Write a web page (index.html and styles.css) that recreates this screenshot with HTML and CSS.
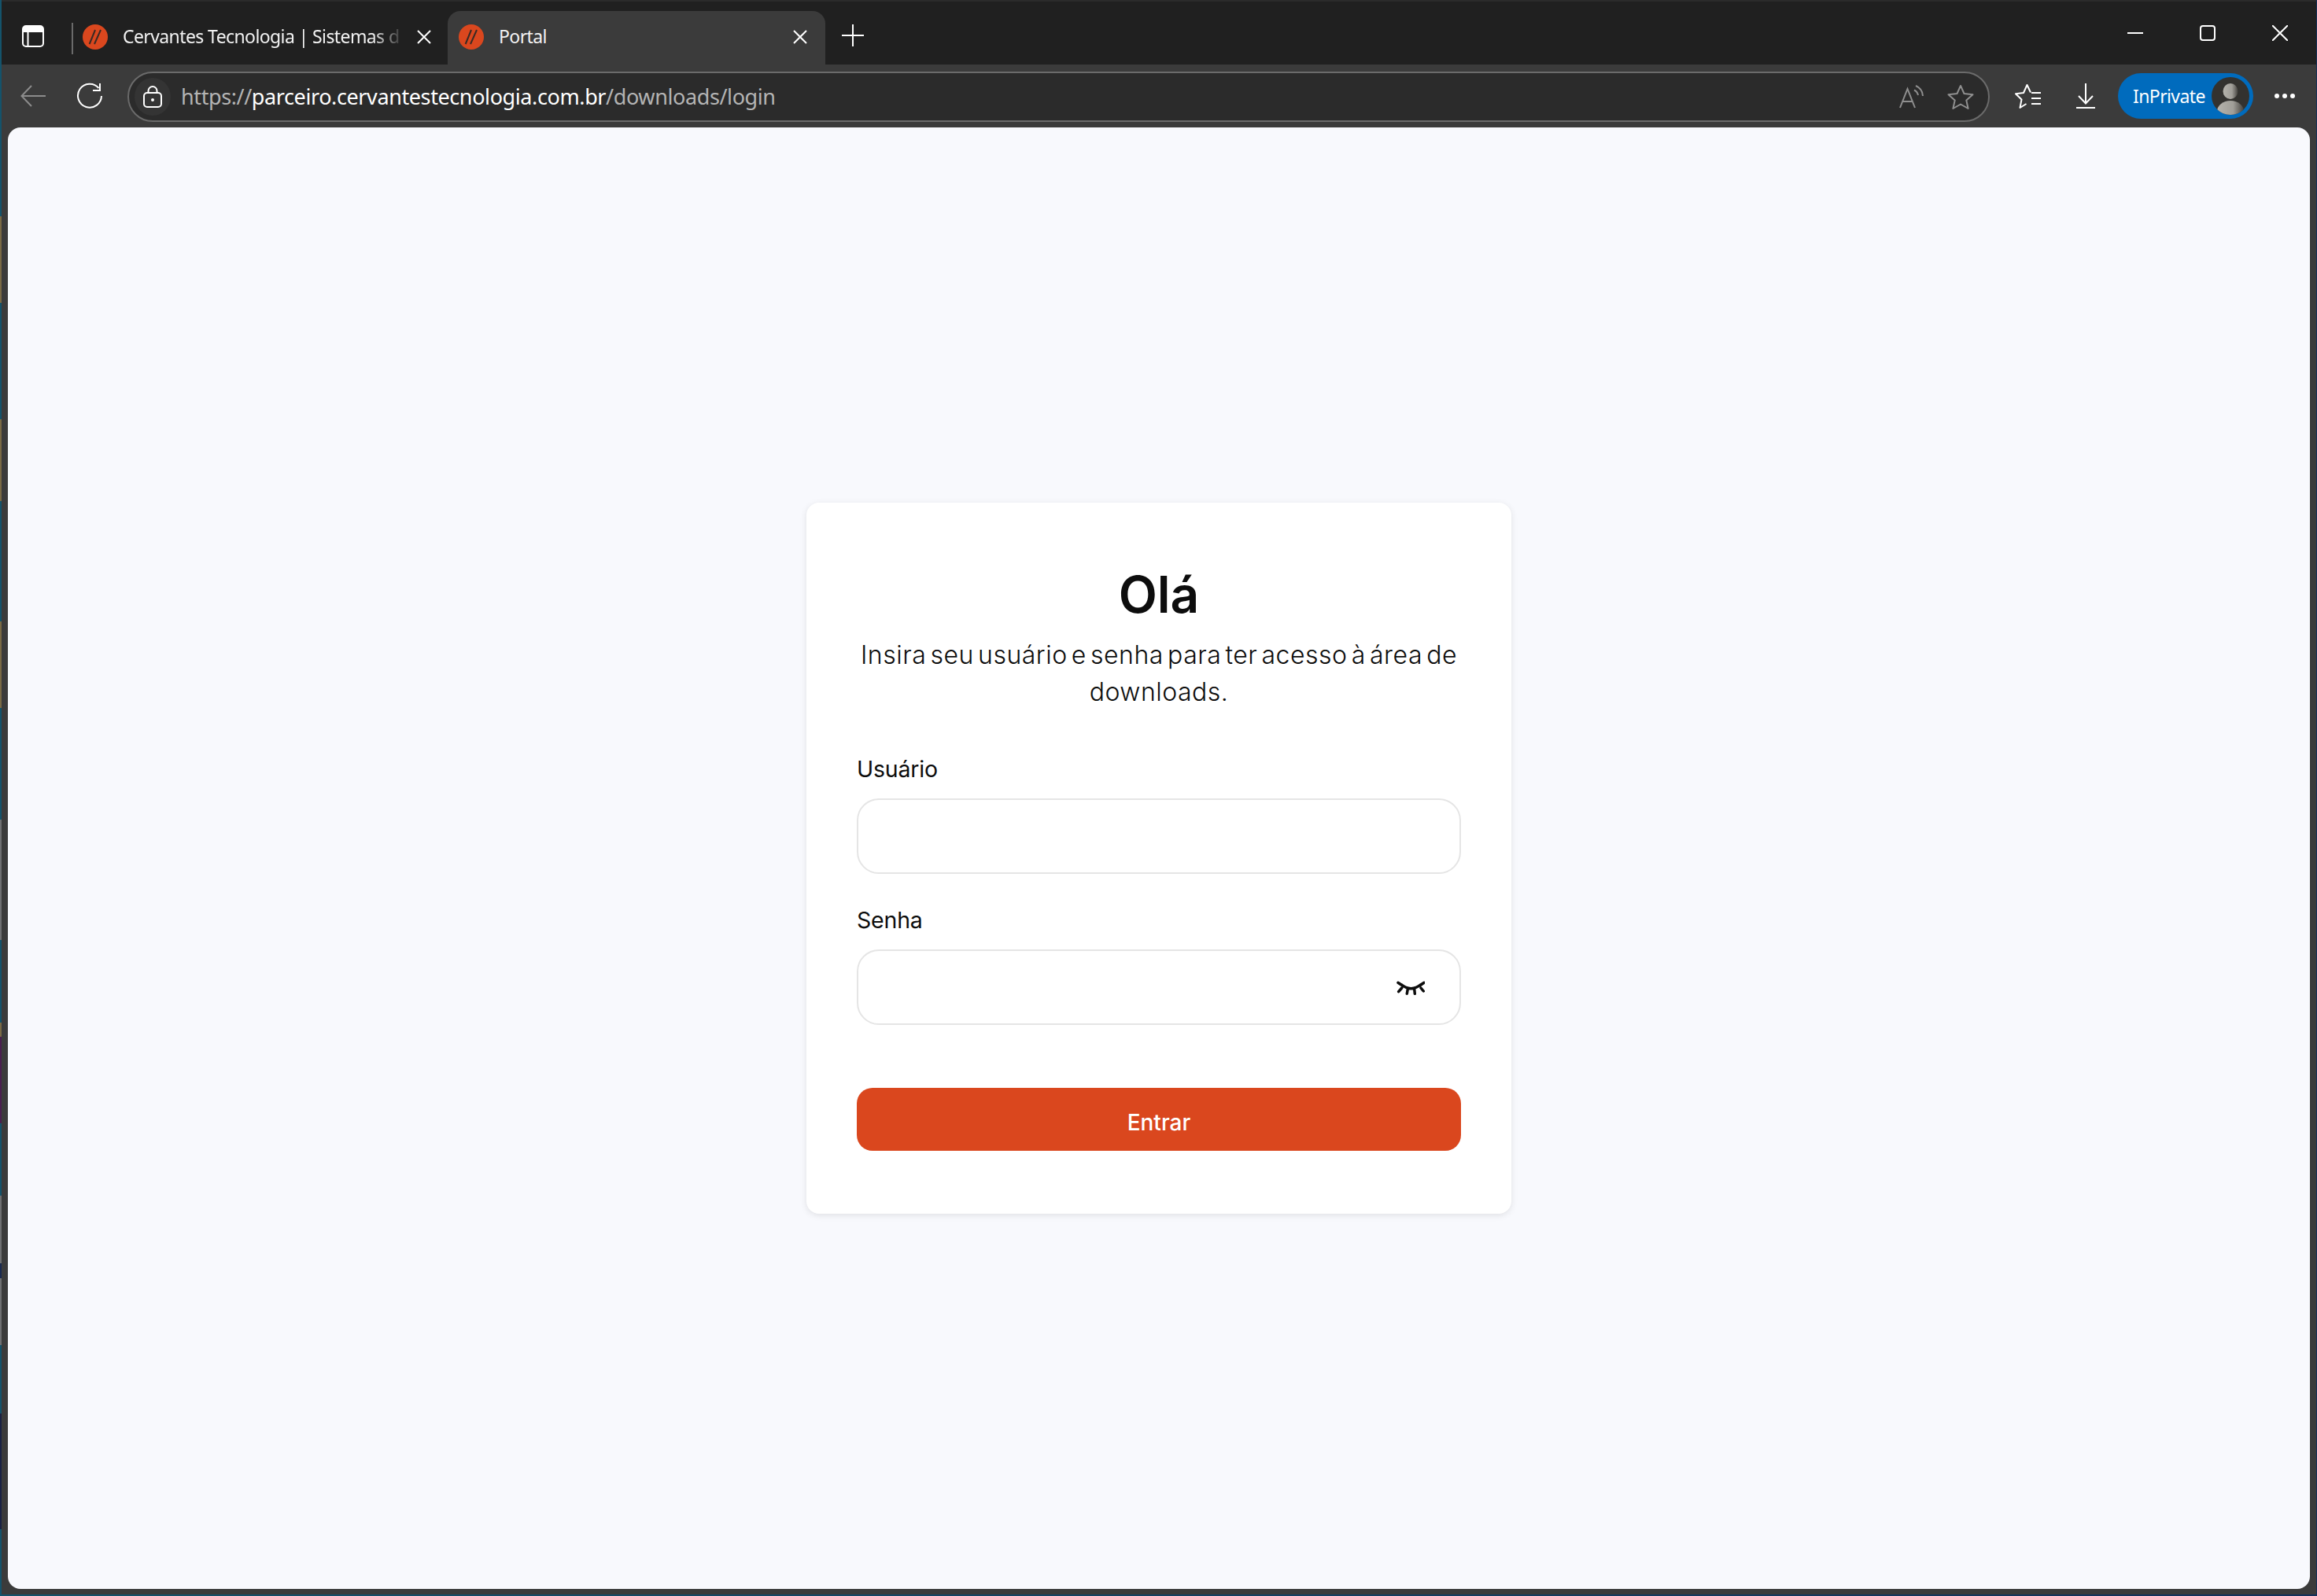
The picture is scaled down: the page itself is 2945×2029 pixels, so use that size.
FILE: index.html
```html
<!DOCTYPE html>
<html lang="pt-BR">
<head>
<meta charset="utf-8">
<title>Portal</title>
<link rel="stylesheet" href="styles.css">
</head>
<body>
<div class="window">
  <header class="titlebar">
    <svg class="ic-sidebar" width="30" height="30" viewBox="0 0 30 30" fill="none">
      <rect x="2" y="2" width="26" height="26" rx="4" stroke="#fff" stroke-width="2"/>
      <path d="M2 6a4 4 0 0 1 4-4h18a4 4 0 0 1 4 4v4H2z" fill="#fff"/>
      <path d="M8.500 10v18" stroke="#fff" stroke-width="2"/>
    </svg>
    <span class="tab-sep"></span>
    <div class="tab">
      <svg class="favicon" width="32" height="32" viewBox="0 0 32 32"><circle cx="16" cy="16" r="16" fill="#da471e"/><path d="M16 7 8.700 25M23 7l-8 18" stroke="#3a2a24" stroke-width="2"/></svg>
      <span class="tab-title tab-title-fade">Cervantes Tecnologia | Sistemas d</span>
      <svg class="tab-close" width="18" height="18" viewBox="0 0 18 18"><path d="M1 1l16 16M17 1 1 17" stroke="#fff" stroke-width="2"/></svg>
    </div>
    <div class="tab tab-active">
      <svg class="favicon" width="32" height="32" viewBox="0 0 32 32"><circle cx="16" cy="16" r="16" fill="#da471e"/><path d="M16 7 8.700 25M23 7l-8 18" stroke="#3a2a24" stroke-width="2"/></svg>
      <span class="tab-title">Portal</span>
      <svg class="tab-close" width="18" height="18" viewBox="0 0 18 18"><path d="M1 1l16 16M17 1 1 17" stroke="#fff" stroke-width="2"/></svg>
    </div>
    <svg class="ic-plus" width="28" height="28" viewBox="0 0 28 28"><path d="M14 0v28M0 14h28" stroke="#fff" stroke-width="2"/></svg>
    <div class="win-controls">
      <svg width="20" height="20" viewBox="0 0 20 20"><path d="M0 10h20" stroke="#fff" stroke-width="2"/></svg>
      <svg width="20" height="20" viewBox="0 0 20 20" fill="none"><rect x="1" y="1" width="18" height="18" rx="3" stroke="#fff" stroke-width="2"/></svg>
      <svg width="20" height="20" viewBox="0 0 20 20"><path d="M0 0l20 20M20 0 0 20" stroke="#fff" stroke-width="2"/></svg>
    </div>
  </header>

  <nav class="toolbar">
    <svg class="ic-back" width="32" height="28" viewBox="0 0 32 28" fill="none"><path d="M32 14H2M14 1 1.500 14 14 27" stroke="#8c8c8c" stroke-width="2"/></svg>
    <svg class="ic-refresh" width="34" height="34" viewBox="0 0 34 34" fill="none"><path d="M28.500 7A15 15 0 1 0 32 17" stroke="#fff" stroke-width="2"/><path d="M30 1v9h-9" stroke="#fff" stroke-width="2"/></svg>
    <div class="addressbar">
      <span class="lock-wrap">
        <svg width="24" height="28" viewBox="0 0 24 28" fill="none"><rect x="1" y="9" width="22" height="18" rx="4" stroke="#fff" stroke-width="2"/><path d="M6.500 9V6.500a5.500 5.500 0 0 1 11 0V9" stroke="#fff" stroke-width="2"/><circle cx="12" cy="18" r="2" fill="#fff"/></svg>
      </span>
      <span class="url"><span class="url-dim">https://</span><span class="url-host">parceiro.cervantestecnologia.com.br</span><span class="url-dim">/downloads/login</span></span>
      <svg class="ic-read" width="32" height="30" viewBox="0 0 32 30" fill="none"><path d="M1 29 10.500 5 20 29M4.500 21h12" stroke="#8f8f8f" stroke-width="2"/><path d="M19 6.500a9 9 0 0 1 5 6.500M21 1a15 15 0 0 1 9 13" stroke="#8f8f8f" stroke-width="2"/></svg>
      <svg class="ic-star" width="34" height="32" viewBox="0 0 34 32" fill="none"><path d="M17 2l4.500 10 11 1.200-8.200 7.300 2.300 10.500L17 25.500 7.400 31l2.300-10.500L1.500 13.200l11-1.200z" stroke="#8f8f8f" stroke-width="2" stroke-linejoin="round"/></svg>
    </div>
    <svg class="ic-favs" width="34" height="32" viewBox="0 0 34 32" fill="none"><path d="M20 11.500 15.500 2l-4.500 10L1 13.200l7.500 7.300L6.500 31l8-5" stroke="#fff" stroke-width="2" stroke-linejoin="round"/><path d="M21 12h12M21 19h12M21 26h12" stroke="#fff" stroke-width="2"/></svg>
    <svg class="ic-down" width="24" height="32" viewBox="0 0 24 32" fill="none"><path d="M12 0v25M3 16l9 9.500L21 16M0 31h24" stroke="#fff" stroke-width="2"/></svg>
    <div class="inprivate">
      <span class="inprivate-label">InPrivate</span>
      <svg class="avatar" width="48" height="48" viewBox="0 0 48 48">
        <defs>
          <linearGradient id="av" x1="0" x2="1" y1="0" y2="0"><stop offset="0" stop-color="#b5b3ac"/><stop offset="0.6" stop-color="#a09e98"/><stop offset="1" stop-color="#45433f"/></linearGradient>
          <clipPath id="avc"><circle cx="24" cy="24" r="24"/></clipPath>
        </defs>
        <circle cx="24" cy="24" r="24" fill="#33322f"/>
        <g clip-path="url(#avc)"><ellipse cx="24" cy="18" rx="9.500" ry="10" fill="url(#av)"/><ellipse cx="24" cy="44" rx="17" ry="14" fill="url(#av)"/></g>
      </svg>
    </div>
    <div class="more"><span></span><span></span><span></span></div>
  </nav>

  <main class="content">
    <form class="card">
      <h1 class="card-title">Olá</h1>
      <p class="card-text">Insira seu usuário e senha para ter acesso à área de downloads.</p>
      <label class="field-label" for="user">Usuário</label>
      <input class="field-input" id="user" type="text">
      <label class="field-label field-label-second" for="pass">Senha</label>
      <div class="field-wrap">
        <input class="field-input" id="pass" type="password">
        <svg class="eye" width="40" height="24" viewBox="0 0 40 24" fill="none"><path d="M10 7.700Q22.500 17.700 35 7.700M6 5.300l4.500 3M6.700 16.700 10.700 12M17.300 19.300l1-6M27.300 19.300l-.6-6M38.300 16 35 12M39 5.300l-5 3.500" stroke="#0d0d0d" stroke-width="3.500" stroke-linecap="round"/></svg>
      </div>
      <button class="submit" type="button">Entrar</button>
    </form>
  </main>
</div>
</body>
</html>
```

FILE: styles.css
```css
* { box-sizing: border-box; }

html, body { margin: 0; height: 100%; }

body {
  background:
    linear-gradient(to bottom,
      #14536b 0 275px, #7a6a45 275px 385px,
      #14536b 385px 533px, #7a6a45 533px 637px,
      #14536b 637px 790px, #7a6a45 790px 900px,
      #14536b 900px 1042px, #6f7072 1042px 1195px,
      #14536b 1195px 1300px, #7a6a45 1300px 1318px,
      #4a1f4f 1318px 1428px,
      #14536b 1428px 1520px, #6f7072 1520px 1606px,
      #1a2a50 1606px 1625px, #6f7072 1625px 1710px,
      #14536b 1710px 1797px, #1a2244 1797px 1944px,
      #14536b 1944px 100%) left top / 2px 100% no-repeat,
    linear-gradient(to right, #14536b, #14305a);
  padding: 0 1px 2px 2px;
  overflow: hidden;
  font-family: "Noto Sans", "Open Sans", sans-serif;
}

.window {
  height: 100%;
  display: flex;
  flex-direction: column;
  background: #3b3b3b;
  border-top: 2px solid #2b2b2b;
}

.titlebar {
  height: 80px;
  flex: none;
  background: #202020;
  display: flex;
  align-items: flex-end;
  padding-left: 25px;
  color: #fff;
}

.ic-sidebar { margin-bottom: 21px; flex: none; }

.tab-sep {
  width: 2px;
  height: 40px;
  background: #6a6a6a;
  margin: 0 0 13px 34px;
  flex: none;
}

.tab {
  width: 476px;
  height: 68px;
  display: flex;
  align-items: center;
  padding: 0 21px 2px 12px;
  flex: none;
  border-radius: 16px 16px 0 0;
}

.tab-active {
  background: #3b3b3b;
  width: 480px;
  padding-left: 14px;
  padding-right: 23px;
}

.favicon { flex: none; }

.tab-title {
  flex: 1;
  margin: 0 0 3px 19px;
  font-size: 23px;
  line-height: 32px;
  letter-spacing: -0.6px;
  white-space: nowrap;
  overflow: hidden;
  color: #f2f2f2;
}

.tab-title-fade {
  -webkit-mask-image: linear-gradient(to right, #000 90%, rgba(0, 0, 0, 0.15) 100%);
  mask-image: linear-gradient(to right, #000 90%, rgba(0, 0, 0, 0.15) 100%);
  margin-right: 22px;
}

.tab-close { flex: none; }

.ic-plus { margin: 0 0 23px 21px; flex: none; }

.win-controls {
  margin-left: auto;
  margin-bottom: 30px;
  padding-right: 36px;
  display: flex;
  gap: 72px;
}

.toolbar {
  height: 80px;
  flex: none;
  display: flex;
  align-items: center;
  padding-left: 24px;
  background: #3b3b3b;
}

.toolbar > svg { flex: none; }

.ic-refresh { margin-left: 39px; }

.addressbar {
  width: 2367px;
  height: 64px;
  margin: 1px 0 0 31px;
  border: 2px solid #6b6b6b;
  border-radius: 32px;
  background: #2b2b2b;
  display: flex;
  align-items: center;
  padding-left: 7px;
  flex: none;
}

.lock-wrap {
  width: 46px;
  height: 48px;
  border-radius: 50%;
  background: #343434;
  display: flex;
  align-items: center;
  justify-content: center;
  flex: none;
}

.url {
  margin-left: 13px;
  font-size: 27px;
  letter-spacing: -0.4px;
  white-space: nowrap;
  flex: 1;
}

.url-dim { color: #b4b4b4; }
.url-host { color: #fff; }

.ic-read { margin-right: 29px; flex: none; }
.ic-star { margin-right: 18px; flex: none; }

.ic-favs { margin-left: 32px; }
.ic-down { margin-left: 44px; }

.inprivate {
  width: 172px;
  height: 58px;
  margin-left: 29px;
  border-radius: 29px;
  background: #006bbd;
  display: flex;
  align-items: center;
  justify-content: space-between;
  padding: 0 5px 0 19px;
  flex: none;
}

.inprivate-label {
  font-size: 23px;
  letter-spacing: -0.6px;
  color: #fff;
}

.avatar { flex: none; }

.more {
  margin-left: 27px;
  display: flex;
  gap: 4px;
}

.more span {
  width: 6px;
  height: 6px;
  border-radius: 50%;
  background: #fff;
}

.content {
  flex: 1;
  min-height: 0;
  margin: 0 8px 7px 8px;
  background: #f8f9fd;
  border-radius: 16px;
  display: flex;
  align-items: center;
  justify-content: center;
}

.card {
  width: 896px;
  padding: 81px 64px 80px;
  background: #fff;
  border-radius: 16px;
  box-shadow: 0 2px 8px rgba(0, 0, 0, 0.1);
  font-family: "Inter", "Lato", sans-serif;
  color: #0d0d0d;
}

.card-title {
  margin: 0;
  font-size: 64px;
  line-height: 72px;
  font-weight: 600;
  text-align: center;
}

.card-text {
  margin: 17px 0 57px;
  font-size: 32px;
  line-height: 47px;
  font-weight: 350;
  letter-spacing: 0.5px;
  word-spacing: -4.300px;
  text-align: center;
}

.field-label {
  display: block;
  font-size: 28.500px;
  line-height: 36px;
  letter-spacing: -0.2px;
  margin-bottom: 19px;
}

.field-label-second { margin-top: 41px; }

.field-input {
  display: block;
  width: 100%;
  height: 96px;
  border: 2.500px solid #e5e5e5;
  border-radius: 28px;
  background: #fff;
  outline: none;
}

.field-wrap { position: relative; }

.eye {
  position: absolute;
  right: 46px;
  top: 37px;
}

.submit {
  display: block;
  width: 100%;
  height: 80px;
  margin-top: 80px;
  padding-top: 8px;
  border: 0;
  border-radius: 20px;
  background: #da471e;
  color: #fff;
  font-family: "Inter", sans-serif;
  font-size: 28px;
  font-weight: 500;
}
```
